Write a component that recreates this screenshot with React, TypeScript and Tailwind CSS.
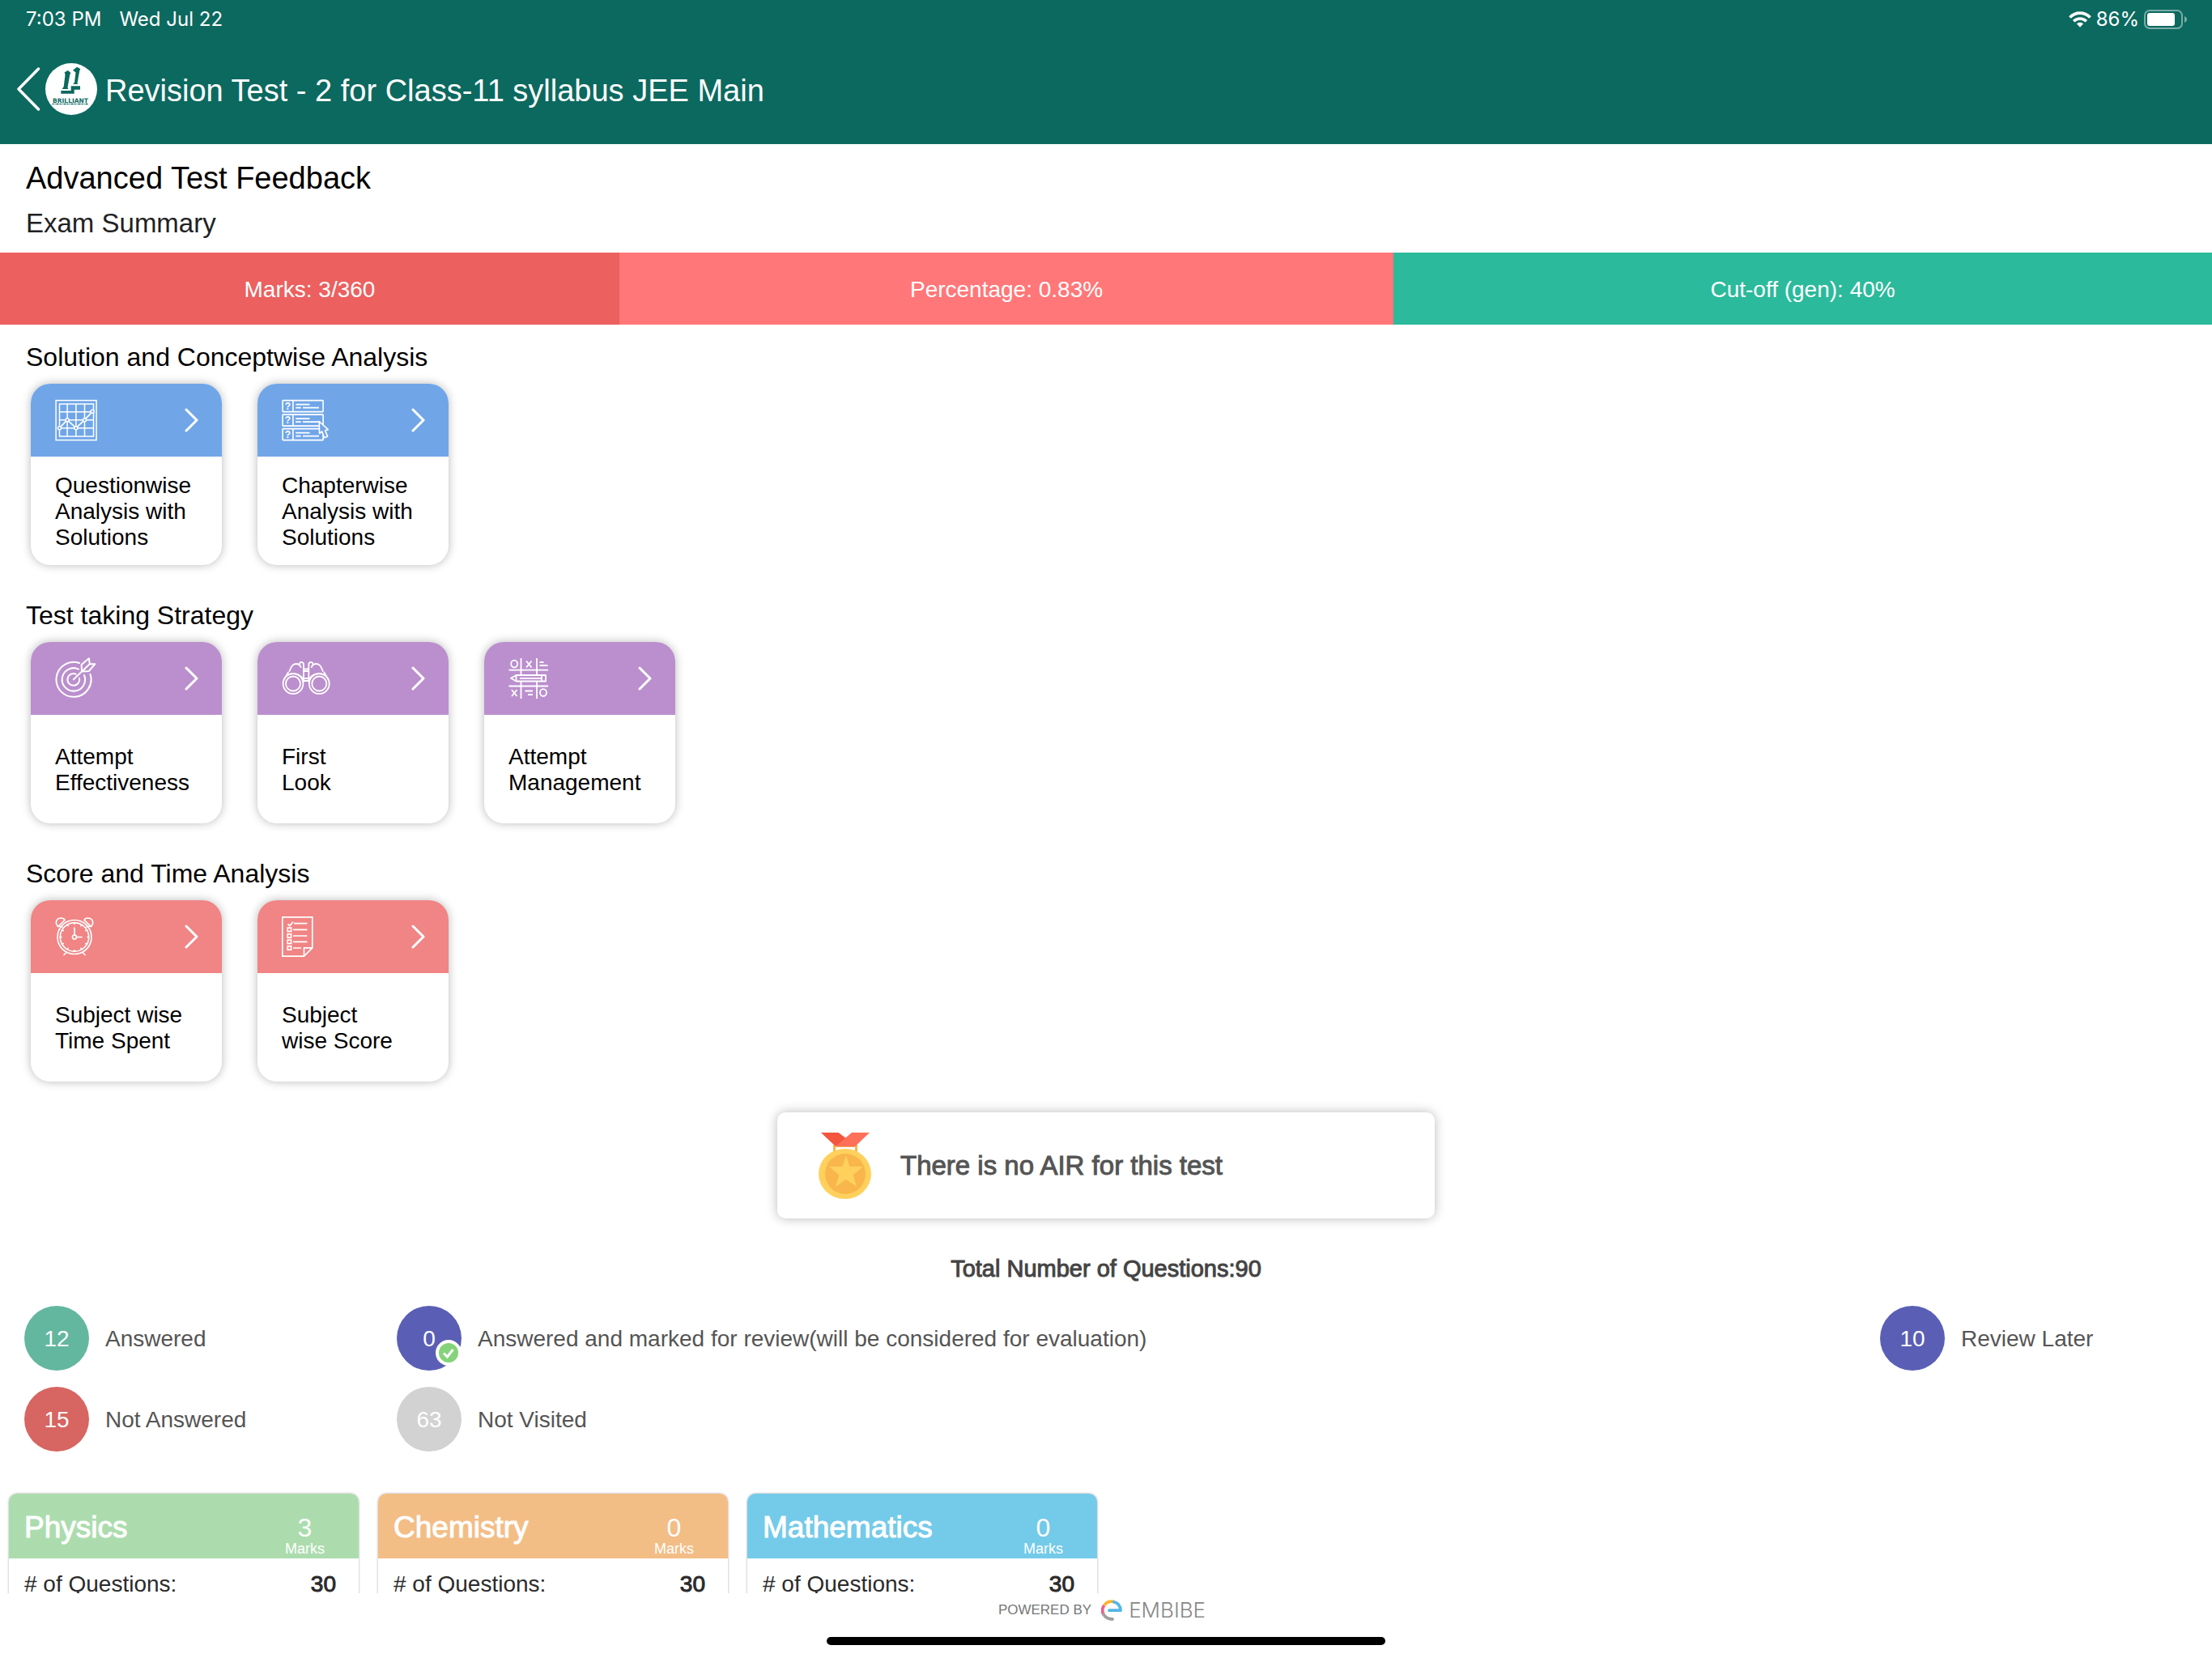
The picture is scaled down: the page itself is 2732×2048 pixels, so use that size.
import type { ReactNode } from 'react'

const summary = [
  { label: 'Marks: 3/360', className: 'w-[28%] bg-[#ec605f]' },
  { label: 'Percentage: 0.83%', className: 'w-[35%] bg-[#ff7779]' },
  { label: 'Cut-off (gen): 40%', className: 'w-[37%] bg-[#2bba9b]' },
]

const subjects = [
  { name: 'Physics', marks: 3, questions: 30, color: 'bg-[#acdcae]' },
  { name: 'Chemistry', marks: 0, questions: 30, color: 'bg-[#f3bd86]' },
  { name: 'Mathematics', marks: 0, questions: 30, color: 'bg-[#74cae9]' },
]

function ChartIcon() {
  return (
    <svg width="52" height="52" viewBox="-0.5 -1 52 52" fill="none" stroke="white" strokeWidth="1.5">
      <rect x="0.6" y="0.6" width="50" height="49" />
      <rect x="5" y="5" width="42" height="40" />
      <path d="M14.6 5v40M25.4 5v40M36 5v40M5 14.7h42M5 24.7h42M5 34.7h42" />
      <path d="M5 34.7l9.6-10 10.8 10 10.6-10 9.7-10.4" strokeWidth="1.7" />
      <g fill="#70a6e8">
        <circle cx="5" cy="34.7" r="2" />
        <circle cx="14.6" cy="24.7" r="2" />
        <circle cx="25.4" cy="34.7" r="2" />
        <circle cx="36" cy="24.7" r="2" />
        <circle cx="45.7" cy="14.3" r="2" />
      </g>
    </svg>
  )
}

function QuizIcon() {
  return (
    <svg width="59" height="52" viewBox="-0.5 -1 59 52" fill="none" stroke="white" strokeWidth="1.6">
      {[0.6, 18.1, 35.6].map((y) => (
        <g key={y}>
          <rect x="0.6" y={y} width="50" height="14" rx="0.6" />
          <path d={`M13.4 ${y}v14M16.8 ${y + 5}h17.2M16.8 ${y + 9}h6.4M25.5 ${y + 9}h20`} />
          <text
            x="7"
            y={y + 11}
            textAnchor="middle"
            fontSize="12"
            fontWeight="700"
            fill="white"
            stroke="none"
            className="font-['Liberation_Sans',sans-serif]"
          >
            ?
          </text>
        </g>
      ))}
      <path d="M45.7 26.5l.4 15 3-2.6 3 7.8 4-1.6-3-7.4 3.6-1z" fill="#70a6e8" strokeLinejoin="round" />
    </svg>
  )
}

function TargetIcon() {
  return (
    <svg width="52" height="52" viewBox="0 0 52 52" fill="none" stroke="white" strokeWidth="2" strokeLinecap="round" strokeLinejoin="round">
      <path d="M30 7A21.5 21.5 0 1 0 43.5 20.8" />
      <path d="M29 14.6A14.2 14.2 0 1 0 36 22" />
      <path d="M25.7 20.6A7.4 7.4 0 1 0 30 25.7" />
      <path d="M22.8 27.3L43 8M33 17.5l-.4-8.6L41.8 1.2l1 6.8 6.600.2-7.600 8.800z" />
    </svg>
  )
}

function BinocularsIcon() {
  return (
    <svg width="60" height="52" viewBox="0 -3 60 52" fill="none" stroke="white" strokeWidth="1.8" strokeLinecap="round">
      <circle cx="14" cy="29.5" r="12.4" />
      <circle cx="14" cy="29.5" r="9" />
      <circle cx="46.3" cy="29.5" r="12.4" />
      <circle cx="46.3" cy="29.5" r="9" />
      <path d="M9.5 14C12 8 13.5 5 17.5 5c3 0 5 1 6 4M22 5c0-3 5-3 5 1v21" />
      <path d="M50.8 14C48.3 8 46.800 5 42.800 5c-3 0-5 1-6 4M38.300 5c0-3-5-3-5 1v21" />
      <path d="M8 15.5L2.5 25M52.3 15.5L57.8 25M6 19.5c7-4 16-3 20 4M54.3 19.5c-7-4-16-3-20 4" />
      <path d="M27 11.5h6.3M27 14h6.3M27 23h6.3M27 26h6.3" />
    </svg>
  )
}

function StrategyIcon() {
  return (
    <svg width="50" height="52" viewBox="0 -1 50 52" fill="none" stroke="white" strokeWidth="1.8">
      <path d="M15.5 0v21M15.5 28.5V50M35 0v21M35 28.5V50M.5 14.7h48.500M.5 34.5h48.500" />
      <ellipse cx="7.2" cy="7" rx="4" ry="4.3" />
      <ellipse cx="43" cy="42.5" rx="4" ry="4.3" />
      <path d="M22 3.5l6.5 8M28.5 3.5l-6.5 8M4 39l6.5 8M10.5 39L4 47" />
      <path d="M38.5 5h5M38.5 9h10M20.5 40.5h9.500M24 45h6" />
      <path d="M3 24.8L9.5 21H46v7.500H9.500zM9.500 21v7.500M41 21v7.500M14 24.800h27" strokeLinejoin="round" />
    </svg>
  )
}

function AlarmIcon() {
  return (
    <svg width="48" height="52" viewBox="0 -2 48 52" fill="none" stroke="white" strokeWidth="1.7" strokeLinecap="round">
      <circle cx="24" cy="24.5" r="21" />
      <circle cx="24" cy="24.5" r="17.7" />
      <circle cx="24" cy="24.5" r="2.5" />
      <path d="M24 22V13M26.5 24.5H33" />
      {[0, 30, 60, 90, 120, 150, 180, 210, 240, 270, 300, 330].map((angle) => (
        <path key={angle} d="M24 7v1.500" transform={`rotate(${angle} 24 24.5)`} />
      ))}
      <path d="M3.500 11.500C-.5 7 1.500 1 7.500 1c2.500 0 4 1 4.500 2.500zM4.500 11l4.500 1" />
      <path d="M44.500 11.500C48.500 7 46.500 1 40.500 1 38 1 36.500 2 36 3.500zM43.500 11l-4.500 1" />
      <path d="M14 43.500l-3 3M34 43.500l3 3" />
    </svg>
  )
}

function ChecklistIcon() {
  return (
    <svg width="39" height="52" viewBox="0 -1 39 52" fill="none" stroke="white" strokeWidth="1.7">
      <path d="M.8.8h37v38L27.5 49.2H.8zM27.5 49V38.8h10.3" />
      <path d="M7.5 9.5l2.5 2L14 6.5M15 8.7h16.500M14 16.3h17.500M14 24h17.500M14 31.300h17.500M14 39h10" />
      {[16.3, 24, 31.3, 39].map((y) => (
        <rect key={y} x="7.2" y={y - 2.2} width="4.400" height="4.400" />
      ))}
    </svg>
  )
}

function MedalIcon() {
  return (
    <svg width="65" height="82" viewBox="0 0 65 82">
      <rect x="19.5" y="16.5" width="27" height="10" fill="none" stroke="#f8b64c" strokeWidth="3" />
      <path d="M3 0h21.5L34 7 24 16h-4z" fill="#f3553f" />
      <path d="M41 0h22L45 17.3H20.5z" fill="#ff7058" />
      <ellipse cx="32.5" cy="51" rx="32.5" ry="31" fill="#ffd15c" />
      <circle cx="33" cy="51" r="25" fill="#f8b64c" />
      <path
        d="M34 28.3L38.3 42H55L42.700 52.300 47 66.700 34 58 21 67l4.300-14.700L13 42h16.300z"
        fill="#ffd15c"
      />
    </svg>
  )
}

function BrandLogo() {
  return (
    <svg width="64" height="64" viewBox="0 0 64 64" className="shrink-0">
      <circle cx="32" cy="32" r="32" fill="white" />
      <g fill="#0c695f">
        <path d="M23.700 11.300L28 9l3.300 3-1 2.300L27.500 30l.8 2h-7.600l2-3 1.800-14.500z" />
        <path d="M34 8.700l5-4 4.300 2.300-1 2.300L39.500 24.700l1 1.300H34l2-2 1.500-12.500z" />
        <path d="M31.700 28.300H43v4.500h-7.300v5H19.300V34h12.400z" />
        <text
          x="31"
          y="48.5"
          textAnchor="middle"
          fontSize="7.500"
          fontWeight="700"
          className="font-['DejaVu_Sans',sans-serif]"
        >
          BRILLIANT
        </text>
      </g>
      <path d="M8.500 50.500h45" stroke="#0c695f" strokeWidth="1.400" strokeDasharray="2 1 1 1 3 1" />
    </svg>
  )
}

function EmbibeMark() {
  return (
    <svg width="26" height="26" viewBox="0 0 26 26" fill="none" strokeWidth="3.800">
      <path d="M3 18.500A11 11 0 0 1 3.700 7" stroke="#ee5f8a" />
      <path d="M14 24c-5 0-9-2-11-5.800" stroke="#a0a0a0" strokeLinecap="round" />
      <path d="M3.700 7.200C6 3 11 1 16 2.600" stroke="#f8b432" />
      <path d="M16 2.700c5 1.500 8 5.500 8 10.500H10" stroke="#52b5e8" strokeLinecap="round" strokeLinejoin="round" />
    </svg>
  )
}

const sections: {
  title: string
  color: string
  cards: { lines: string[]; icon: ReactNode }[]
}[] = [
  {
    title: 'Solution and Conceptwise Analysis',
    color: 'bg-[#70a6e8]',
    cards: [
      { lines: ['Questionwise', 'Analysis with', 'Solutions'], icon: <ChartIcon /> },
      { lines: ['Chapterwise', 'Analysis with', 'Solutions'], icon: <QuizIcon /> },
    ],
  },
  {
    title: 'Test taking Strategy',
    color: 'bg-[#bb8fce]',
    cards: [
      { lines: ['Attempt', 'Effectiveness'], icon: <TargetIcon /> },
      { lines: ['First', 'Look'], icon: <BinocularsIcon /> },
      { lines: ['Attempt', 'Management'], icon: <StrategyIcon /> },
    ],
  },
  {
    title: 'Score and Time Analysis',
    color: 'bg-[#f18484]',
    cards: [
      { lines: ['Subject wise', 'Time Spent'], icon: <AlarmIcon /> },
      { lines: ['Subject', 'wise Score'], icon: <ChecklistIcon /> },
    ],
  },
]

function LegendItem({ count, label, color, checked }: { count: number; label: string; color: string; checked?: boolean }) {
  return (
    <div className="flex items-center gap-5">
      <div className={`relative flex size-20 items-center justify-center rounded-full pt-[2px] text-white ${color}`}>
        {count}
        {checked && (
          <svg width="32" height="32" viewBox="0 0 32 32" className="absolute right-0 bottom-1.5">
            <circle cx="16" cy="16" r="16" fill="white" />
            <circle cx="16" cy="16" r="12" fill="#84d37a" />
            <path d="M10 16.500l4.500 4.500 7-9" fill="none" stroke="white" strokeWidth="3" />
          </svg>
        )}
      </div>
      <span className="pt-[2px]">{label}</span>
    </div>
  )
}

export default function App() {
  return (
    <div className="flex h-screen flex-col bg-white font-['Liberation_Sans',Arial,sans-serif] text-[28px] text-black">
      <header className="bg-[#0c695f] pb-[6px] text-white">
        {/* Status bar */}
        <div className="flex h-12 items-center justify-between pr-[30px] pl-8 font-['Inter',sans-serif] text-[24px]">
          <div className="flex gap-[22px]">
            <span>7:03 PM</span>
            <span>Wed Jul 22</span>
          </div>
          <div className="flex items-center gap-[6px]">
            <svg width="28" height="20" viewBox="0 0 28 20" fill="none" stroke="white" strokeWidth="3.600">
              <path d="M1.500 7.500C8.500.3 19.500.3 26.500 7.500" />
              <path d="M6.200 12.200c4.500-4.300 11.100-4.300 15.600 0" />
              <path d="M9.800 15.300c2.400-2.100 6-2.100 8.400 0L14 19.800z" fill="white" stroke="none" />
            </svg>
            <span>86%</span>
            <svg width="54" height="24" viewBox="0 0 54 24">
              <rect x="1" y="1" width="46" height="22" rx="6" fill="none" stroke="white" strokeOpacity="0.45" strokeWidth="2" />
              <rect x="4" y="4" width="34" height="16" rx="3" fill="white" />
              <path d="M50 8c4 1.500 4 6.500 0 8z" fill="white" fillOpacity="0.45" />
            </svg>
          </div>
        </div>

        {/* Title bar */}
        <div className="flex h-[124px] items-center pl-5">
          <button aria-label="Back" className="mr-[6px]">
            <svg width="30" height="54" viewBox="0 0 30 54" fill="none" stroke="white" strokeWidth="3.500" strokeLinecap="round" strokeLinejoin="round">
              <path d="M27.500 2L3 27l24.500 25" />
            </svg>
          </button>
          <BrandLogo />
          <h1 className="ml-[10px] pt-1 text-[38px]">Revision Test - 2 for Class-11 syllabus JEE Main</h1>
        </div>
      </header>

      <main className="min-h-0 flex-1 overflow-hidden">
        <div className="px-8 pt-[14px] pb-2">
          <h2 className="text-[38px] leading-[56px]">Advanced Test Feedback</h2>
          <p className="text-[33px] leading-[56px] text-[#222]">Exam Summary</p>
        </div>

        <div className="flex h-[89px] text-white">
          {summary.map((item) => (
            <div key={item.label} className={`flex items-center justify-center pt-[2px] ${item.className}`}>
              {item.label}
            </div>
          ))}
        </div>

        {sections.map((section) => (
          <section key={section.title} className="pt-4 pb-[22px]">
            <h3 className="mb-[9px] pl-8 text-[32px] leading-[48px]">{section.title}</h3>
            <div className="flex gap-11 pl-[38px]">
              {section.cards.map((card) => (
                <button
                  key={card.lines.join(' ')}
                  className="flex h-[224px] w-[236px] flex-col overflow-hidden rounded-3xl bg-white text-left shadow-[0_0_12px_rgba(0,0,0,0.28)]"
                >
                  <span className={`flex h-[90px] w-full items-center justify-between pr-[29px] pl-[30px] ${section.color}`}>
                    {card.icon}
                    <svg width="18" height="30" viewBox="0 0 18 30" fill="none" stroke="white" strokeWidth="3" strokeLinecap="round" strokeLinejoin="round">
                      <path d="M3 2l13 13L3 28" />
                    </svg>
                  </span>
                  <span className="flex flex-1 flex-col justify-center pt-[2px] pl-[30px] leading-8">
                    {card.lines.map((line) => (
                      <span key={line}>{line}</span>
                    ))}
                  </span>
                </button>
              ))}
            </div>
          </section>
        ))}

        {/* Rank */}
        <div className="mx-auto mt-4 flex h-[131px] w-[812px] items-center gap-9 rounded-[10px] bg-white pl-[51px] shadow-[0_0_14px_rgba(0,0,0,0.28)]">
          <MedalIcon />
          <p className="text-[33px] text-[#555] [-webkit-text-stroke:1px_#555]">There is no AIR for this test</p>
        </div>

        <p className="mt-[42px] text-center text-[29px] leading-10 text-[#444] [-webkit-text-stroke:1px_#444]">
          Total Number of Questions:90
        </p>

        <div className="mt-[26px] grid grid-cols-[460px_1fr_410px] gap-y-5 pl-[30px] text-[#555]">
          <LegendItem count={12} label="Answered" color="bg-[#64b79f]" />
          <LegendItem
            count={0}
            label="Answered and marked for review(will be considered for evaluation)"
            color="bg-[#5a5fb5]"
            checked
          />
          <LegendItem count={10} label="Review Later" color="bg-[#5a5fb5]" />
          <LegendItem count={15} label="Not Answered" color="bg-[#d76561]" />
          <LegendItem count={63} label="Not Visited" color="bg-[#d2d2d2]" />
        </div>

        {/* Subjects */}
        <div className="mt-[52px] flex gap-6 pl-[11px]">
          {subjects.map((subject) => (
            <article
              key={subject.name}
              className="w-[432px] overflow-hidden rounded-t-[10px] bg-white text-[#2b2b2b] shadow-[0_0_3px_rgba(0,0,0,0.35)]"
            >
              <div className={`flex h-20 justify-between pr-[42px] pl-[19px] text-white ${subject.color}`}>
                <h4 className="text-[37px] leading-[84px] [-webkit-text-stroke:1px_white]">{subject.name}</h4>
                <div className="flex flex-col items-center pt-6">
                  <span className="text-[32px] leading-9">{subject.marks}</span>
                  <span className="text-lg leading-4">Marks</span>
                </div>
              </div>
              <div className="flex justify-between pt-3 pr-7 pb-10 pl-[19px] leading-10">
                <span># of Questions:</span>
                <span className="[-webkit-text-stroke:1px_#2b2b2b]">{subject.questions}</span>
              </div>
            </article>
          ))}
        </div>
      </main>

      <footer className="flex h-20 flex-col items-center justify-between pt-1 pb-4">
        <div className="flex items-center pr-[10px]">
          <span className="text-[17px] text-[#777]">POWERED BY</span>
          <span className="ml-3 flex items-center gap-2">
            <EmbibeMark />
            <span className="font-['Inter',sans-serif] text-[26px] leading-[34px] font-light text-[#888]">EMBIBE</span>
          </span>
        </div>
        <div className="h-[10px] w-[690px] rounded-full bg-black" />
      </footer>
    </div>
  )
}
